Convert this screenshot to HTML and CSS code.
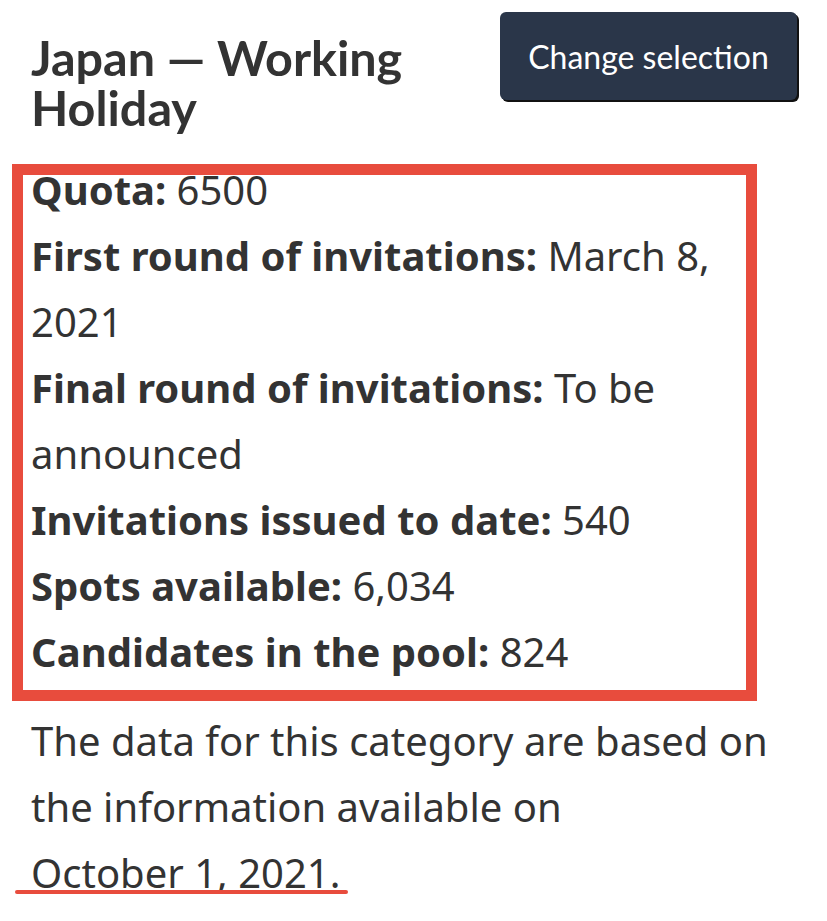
FILE: index.html
```html
<!DOCTYPE html>
<html lang="en">
<head>
<meta charset="utf-8">
<title>Japan — Working Holiday</title>
<link rel="stylesheet" href="styles.css">
</head>
<body>
<main class="page">
  <header class="head">
    <h1 class="title">Japan — Working Holiday</h1>
    <button class="btn" type="button">Change selection</button>
  </header>
  <section class="box">
    <div class="rows">
      <p class="row"><b>Quota:</b> 6500</p>
      <p class="row"><b>First round of invitations:</b> March 8, 2021</p>
      <p class="row"><b>Final round of invitations:</b> To be announced</p>
      <p class="row"><b>Invitations issued to date:</b> 540</p>
      <p class="row"><b>Spots available:</b> 6,034</p>
      <p class="row"><b>Candidates in the pool:</b> 824</p>
    </div>
  </section>
  <p class="note">The data for this category are based on the information available on <span class="date">October 1, 2021.</span></p>
</main>
</body>
</html>
```

FILE: styles.css
```css
html, body {
  margin: 0;
  padding: 0;
  background: #ffffff;
}
.page {
  width: 827px;
  height: 921px;
  overflow: hidden;
  padding: 12px 30px 0 31px;
  box-sizing: border-box;
  color: #333333;
  font-family: "Noto Sans", "Open Sans", sans-serif;
}
.head {
  display: flex;
  justify-content: space-between;
  align-items: flex-start;
}
.title {
  margin: 20px 0 0;
  width: 440px;
  font-family: Lato, "Liberation Sans", sans-serif;
  font-weight: 700;
  font-size: 48.5px;
  line-height: 50px;
  color: #333333;
}
.btn {
  width: 297px;
  height: 88px;
  background: #2a3649;
  color: #ffffff;
  border: none;
  border-radius: 6px;
  box-shadow: 2px 2px 0 #111111;
  font-family: Lato, "Liberation Sans", sans-serif;
  font-size: 32px;
  font-weight: 400;
  padding: 0;
}
.box {
  margin: 32px 0 0 -19px;
  width: 745px;
  height: 537px;
  box-sizing: border-box;
  border: 11px solid #e84c3d;
  padding: 0 0 0 8px;
}
.rows {
  margin-top: -18px;
}
.row {
  margin: 0;
  font-size: 40px;
  line-height: 66px;
}
.row b {
  font-weight: 700;
}
.note {
  margin: 7px 0 0;
  font-size: 40px;
  line-height: 66px;
  width: 760px;
}
.date {
  position: relative;
  white-space: nowrap;
}
.date::after {
  content: "";
  position: absolute;
  left: -16px;
  right: -8px;
  bottom: 6px;
  height: 4px;
  border-radius: 2px;
  background: #e84c3d;
}
```
